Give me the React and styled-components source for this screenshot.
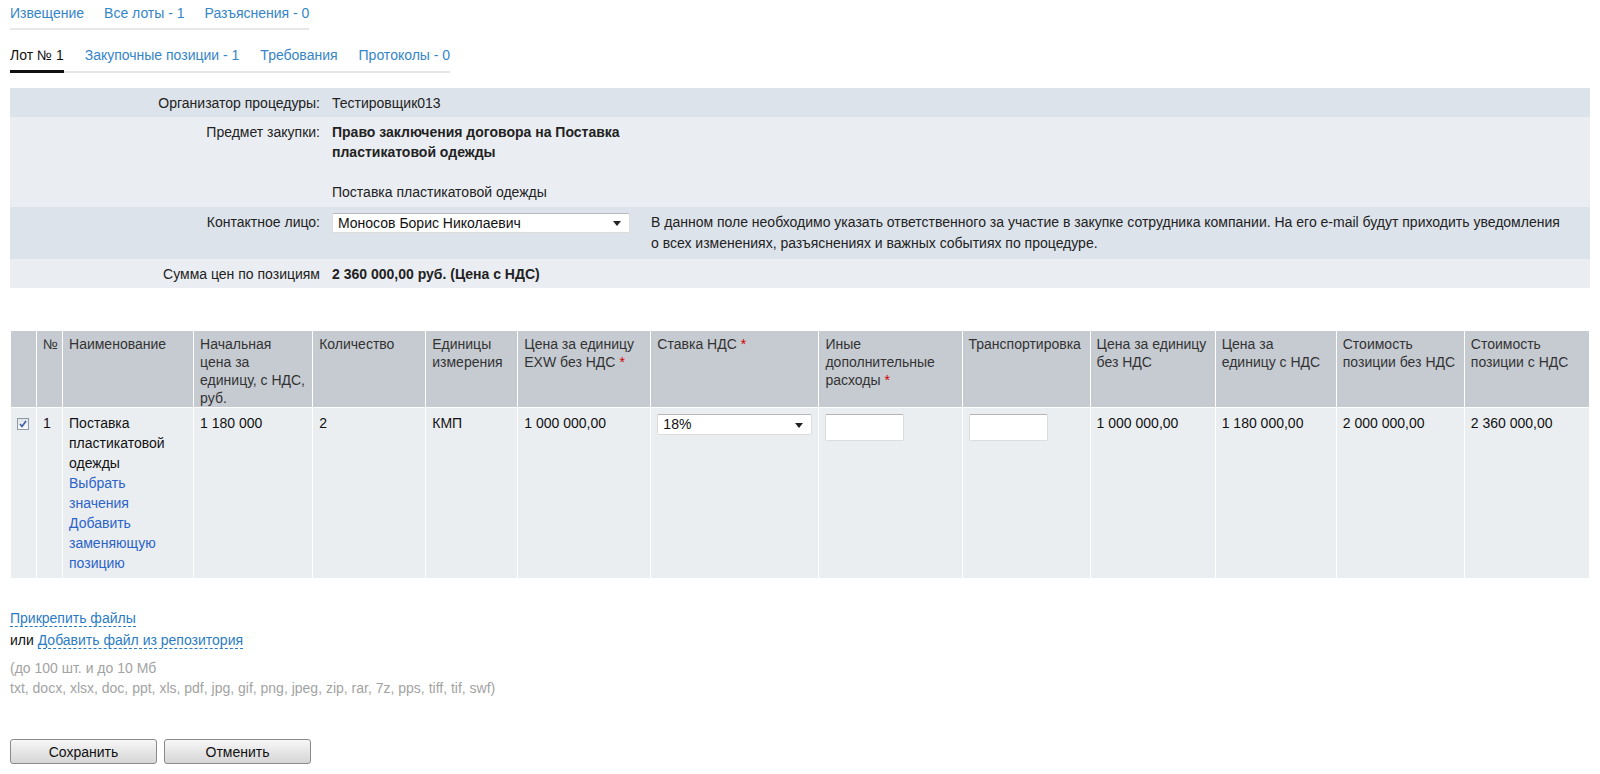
import React from 'react';
import styled, { createGlobalStyle } from 'styled-components';

const GlobalStyle = createGlobalStyle`
  body {
    margin: 0;
    background: #fff;
    font-family: "Liberation Sans", Arial, sans-serif;
    font-size: 14px;
    color: #222;
  }
`;

const Page = styled.div`
  padding: 3px 10px 10px;
`;

const TopNav = styled.div`
  display: flex;
  gap: 20px;
  width: fit-content;
  line-height: 20px;
  padding-bottom: 5px;
  border-bottom: 2px solid #e6e7e9;
`;

const NavLink = styled.a`
  color: #3585c9;
  text-decoration: none;
`;

const Tabs = styled.div`
  display: flex;
  gap: 21px;
  width: fit-content;
  margin-top: 15px;
  line-height: 20px;
  border-bottom: 2px solid #e6e7e9;
`;

const Tab = styled.a`
  padding-bottom: 5px;
  margin-bottom: -2px;
  border-bottom: 3px solid ${p => (p.$active ? '#111' : 'transparent')};
  color: ${p => (p.$active ? '#111' : '#3585c9')};
  text-decoration: none;
`;

const InfoPanel = styled.div`
  margin-top: 15px;
`;

const InfoRow = styled.div`
  display: grid;
  grid-template-columns: 322px 319px 1fr;
  padding: 5px 0 ${p => (p.$tight ? 4 : 5)}px;
  line-height: 20px;
  background: ${p => (p.$dark ? '#dde3ea' : '#eaeef2')};
`;

const Label = styled.div`
  text-align: right;
  padding-right: 12px;
  color: #222;
`;

const Value = styled.div`
  padding-right: 19px;
  font-weight: ${p => (p.$bold ? 'bold' : 'normal')};
`;

const Bold = styled.div`
  font-weight: bold;
`;

const Description = styled.div`
  margin-top: 20px;
`;

const Hint = styled.div`
  line-height: 21px;
  padding-right: 20px;
`;

const SelectBox = styled.div`
  position: relative;
  box-sizing: border-box;
  width: ${p => p.$width}px;
  height: ${p => p.$height}px;
  margin-top: ${p => p.$offset || 0}px;
  padding: 0 20px 0 5px;
  background: #fff;
  border: 1px solid #dcdcdc;
  border-top-color: #b9b9b9;
  border-radius: 2px;
  line-height: ${p => p.$height - 2}px;
  white-space: nowrap;
  overflow: hidden;
  color: #111;

  &::after {
    content: '';
    position: absolute;
    right: 8px;
    top: 50%;
    margin-top: -2px;
    border-left: 4px solid transparent;
    border-right: 4px solid transparent;
    border-top: 5px solid #222;
  }
`;

const Table = styled.table`
  width: 100%;
  margin-top: 42px;
  border-collapse: collapse;
  table-layout: fixed;
`;

const HeadCell = styled.th`
  height: 70px;
  padding: 4px 6px 0;
  border: 1px solid #fff;
  background: #c6cbd2;
  font-size: 14px;
  font-weight: normal;
  line-height: 18px;
  color: #333;
  text-align: left;
  vertical-align: top;
`;

const Cell = styled.td`
  padding: 5px 6px 5px;
  border: 1px solid #fff;
  background: #eaeef1;
  line-height: 20px;
  color: #111;
  vertical-align: top;
`;

const Required = styled.span`
  margin-left: 4px;
  color: #d40000;
`;

const RowLink = styled.a`
  display: block;
  color: #2b63c9;
  text-decoration: none;
`;

const CheckBox = styled.span`
  display: block;
  box-sizing: border-box;
  width: 12px;
  height: 12px;
  margin-top: 5px;
  border: 1px solid #8e99a6;
  background: linear-gradient(#dfe3e8, #fbfbfc);

  svg {
    display: block;
  }
`;

const TextInput = styled.input`
  display: block;
  box-sizing: border-box;
  width: 79px;
  height: 27px;
  margin: 1px 0 0;
  background: #fff;
  border: 1px solid #dcdcdc;
  border-top-color: #b5b5b5;
  border-radius: 2px;
`;

const Attach = styled.div`
  margin-top: 28px;
  line-height: 22px;
  color: #111;
`;

const DashedLink = styled.a`
  color: #2c7cc4;
  text-decoration: none;
  border-bottom: 1px dashed #2c7cc4;
`;

const Note = styled.div`
  margin-top: 7px;
  line-height: 20px;
  color: #a3a3a3;
`;

const Buttons = styled.div`
  display: flex;
  gap: 7px;
  margin-top: 41px;
`;

const Button = styled.button`
  width: 147px;
  height: 25px;
  padding: 0;
  border: 1px solid #8a8a8a;
  border-radius: 3px;
  background: linear-gradient(#f7f7f7, #e6e6e6 50%, #d6d6d6);
  font-family: inherit;
  font-size: 14px;
  color: #111;
`;

const columns = [26, 26, 131, 119, 113, 92, 133, 168, 143, 128, 125, 121, 128, 125];

const headers = [
  '',
  '№',
  'Наименование',
  'Начальная цена за единицу, с НДС, руб.',
  'Количество',
  'Единицы измерения',
  ['Цена за единицу EXW без НДС', true],
  ['Ставка НДС', true],
  ['Иные дополнительные расходы', true],
  'Транспортировка',
  'Цена за единицу без НДС',
  'Цена за единицу с НДС',
  'Стоимость позиции без НДС',
  'Стоимость позиции с НДС',
];

function Check() {
  return (
    <CheckBox>
      <svg width="10" height="10" viewBox="0 0 10 10">
        <path d="M2 5 L4 7.5 L8 2" fill="none" stroke="#3a5da8" strokeWidth="1.6" />
      </svg>
    </CheckBox>
  );
}

export default function App() {
  return (
    <Page>
      <GlobalStyle />
      <TopNav>
        <NavLink href="#">Извещение</NavLink>
        <NavLink href="#">Все лоты - 1</NavLink>
        <NavLink href="#">Разъяснения - 0</NavLink>
      </TopNav>

      <Tabs>
        <Tab $active href="#">Лот № 1</Tab>
        <Tab href="#">Закупочные позиции - 1</Tab>
        <Tab href="#">Требования</Tab>
        <Tab href="#">Протоколы - 0</Tab>
      </Tabs>

      <InfoPanel>
        <InfoRow $dark $tight>
          <Label>Организатор процедуры:</Label>
          <Value>Тестировщик013</Value>
        </InfoRow>
        <InfoRow>
          <Label>Предмет закупки:</Label>
          <Value>
            <Bold>Право заключения договора на Поставка пластикатовой одежды</Bold>
            <Description>Поставка пластикатовой одежды</Description>
          </Value>
        </InfoRow>
        <InfoRow $dark>
          <Label>Контактное лицо:</Label>
          <Value>
            <SelectBox $width={298} $height={20} $offset={1}>Моносов Борис Николаевич</SelectBox>
          </Value>
          <Hint>
            В данном поле необходимо указать ответственного за участие в закупке сотрудника
            компании. На его e-mail будут приходить уведомления о всех изменениях, разъяснениях
            и важных событиях по процедуре.
          </Hint>
        </InfoRow>
        <InfoRow $tight>
          <Label>Сумма цен по позициям</Label>
          <Value $bold>2 360 000,00 руб. (Цена с НДС)</Value>
        </InfoRow>
      </InfoPanel>

      <Table>
        <colgroup>
          {columns.map((w, i) => (
            <col key={i} style={{ width: w }} />
          ))}
        </colgroup>
        <thead>
          <tr>
            {headers.map((h, i) =>
              Array.isArray(h) ? (
                <HeadCell key={i}>
                  {h[0]}<Required>*</Required>
                </HeadCell>
              ) : (
                <HeadCell key={i}>{h}</HeadCell>
              )
            )}
          </tr>
        </thead>
        <tbody>
          <tr>
            <Cell><Check /></Cell>
            <Cell>1</Cell>
            <Cell>
              Поставка пластикатовой одежды
              <RowLink href="#">Выбрать значения</RowLink>
              <RowLink href="#">Добавить заменяющую позицию</RowLink>
            </Cell>
            <Cell>1 180 000</Cell>
            <Cell>2</Cell>
            <Cell>КМП</Cell>
            <Cell>1 000 000,00</Cell>
            <Cell>
              <SelectBox $width={155} $height={21} $offset={1}>18%</SelectBox>
            </Cell>
            <Cell><TextInput /></Cell>
            <Cell><TextInput /></Cell>
            <Cell>1 000 000,00</Cell>
            <Cell>1 180 000,00</Cell>
            <Cell>2 000 000,00</Cell>
            <Cell>2 360 000,00</Cell>
          </tr>
        </tbody>
      </Table>

      <Attach>
        <div><DashedLink href="#">Прикрепить файлы</DashedLink></div>
        <div>
          или <DashedLink href="#">Добавить файл из репозитория</DashedLink>
        </div>
      </Attach>

      <Note>
        <div>(до 100 шт. и до 10 Мб</div>
        <div>txt, docx, xlsx, doc, ppt, xls, pdf, jpg, gif, png, jpeg, zip, rar, 7z, pps, tiff, tif, swf)</div>
      </Note>

      <Buttons>
        <Button>Сохранить</Button>
        <Button>Отменить</Button>
      </Buttons>
    </Page>
  );
}
